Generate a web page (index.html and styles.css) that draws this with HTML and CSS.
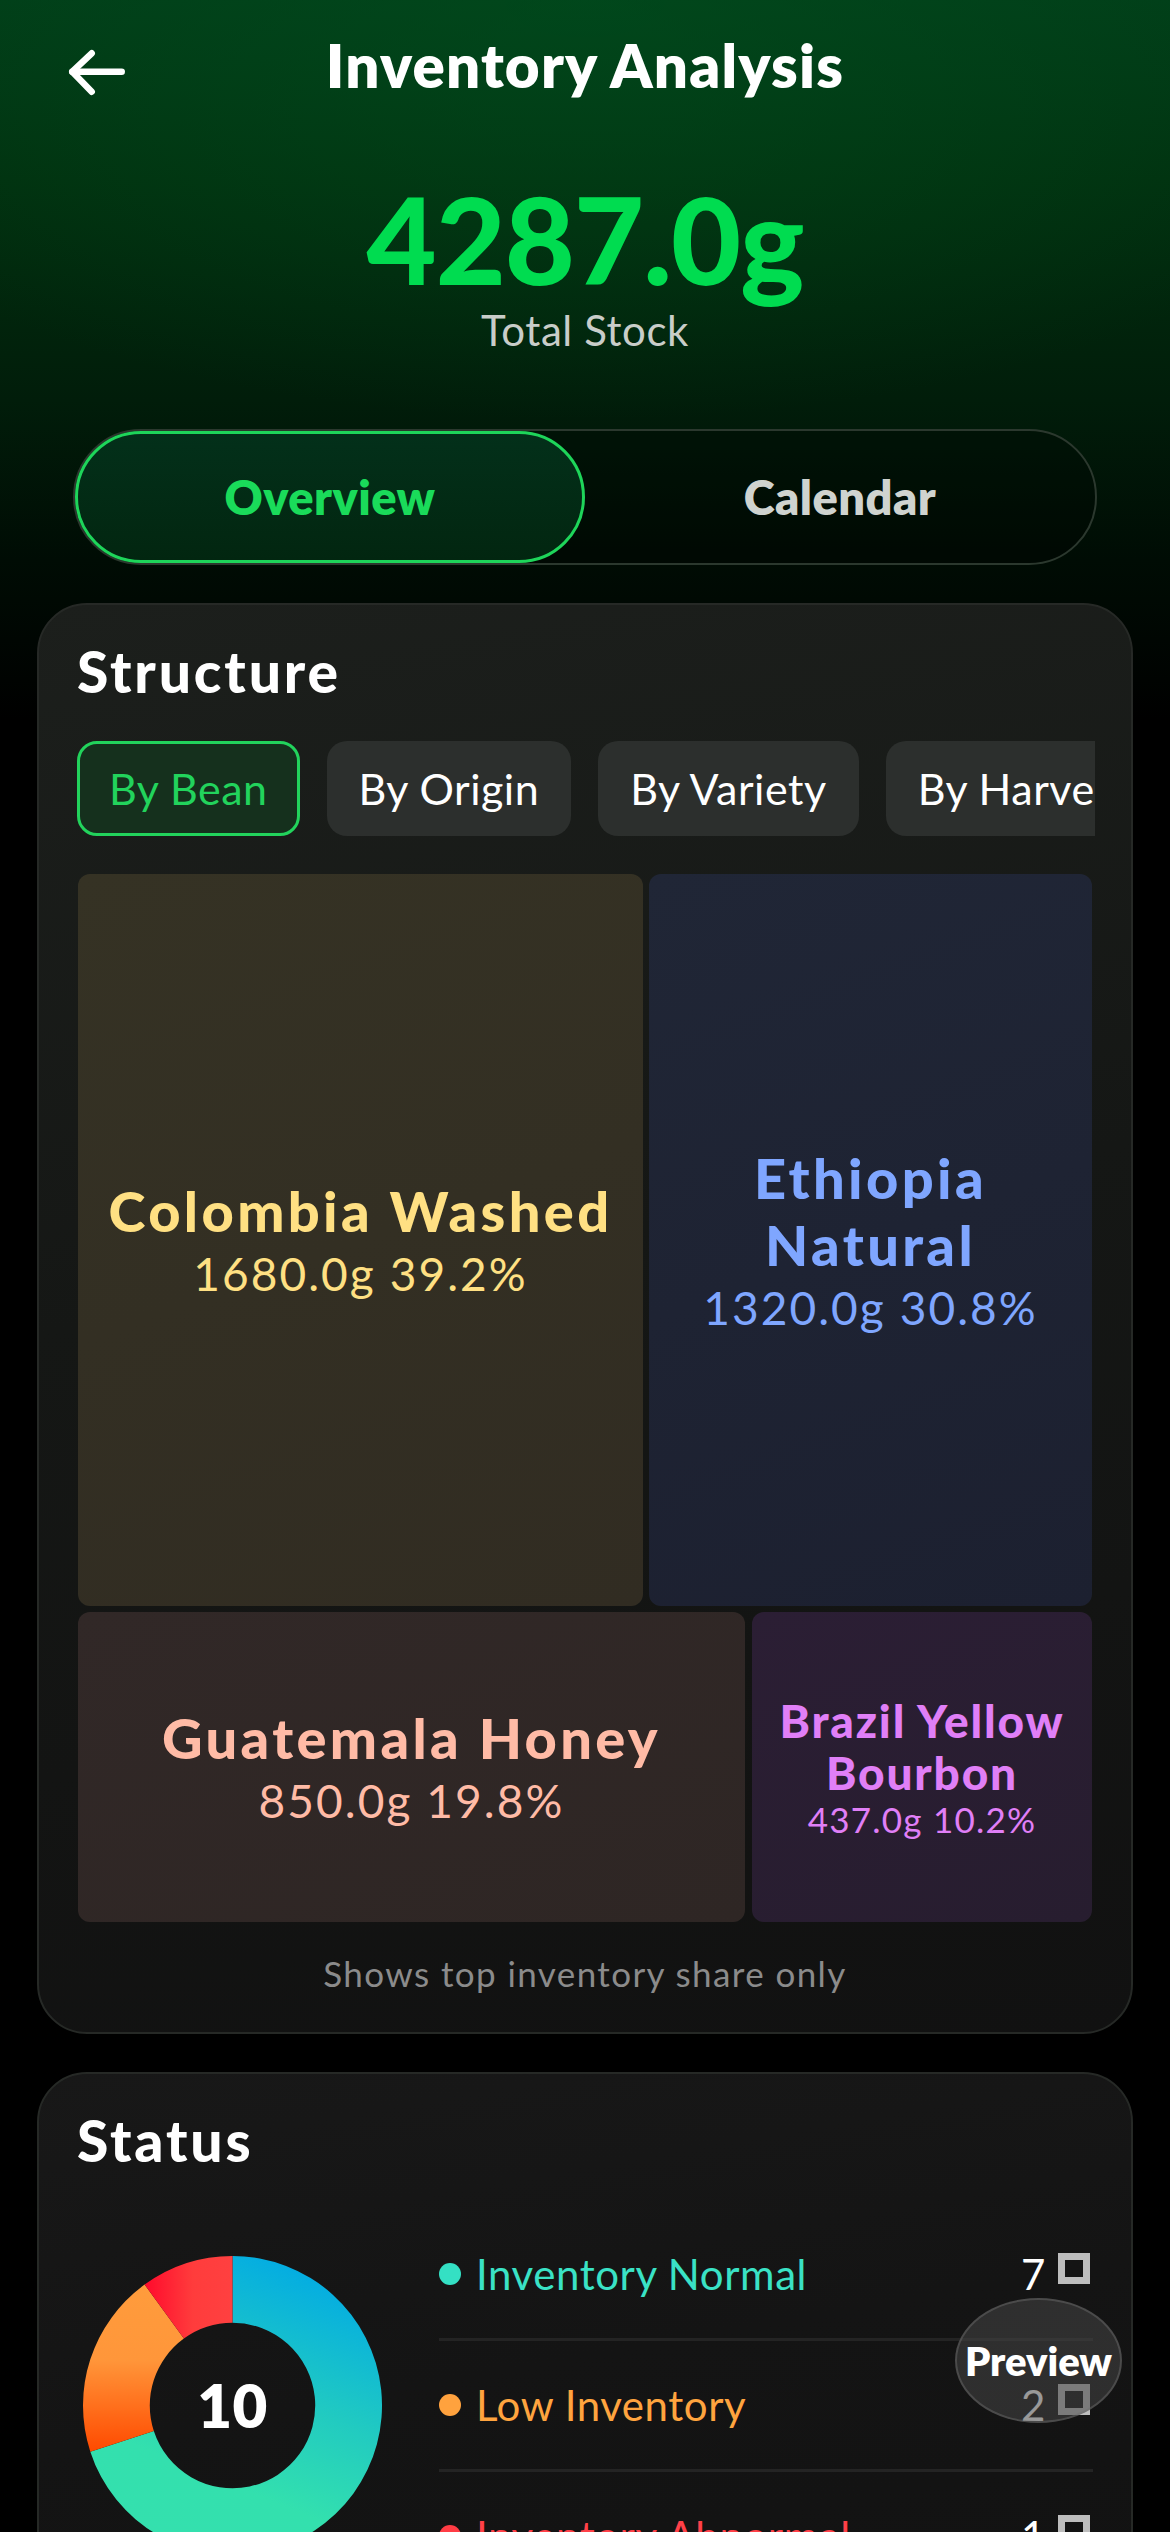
FILE: index.html
```html
<!DOCTYPE html>
<html lang="en">
<head>
<meta charset="utf-8">
<title>Inventory Analysis</title>
<link rel="stylesheet" href="styles.css">
</head>
<body>
<div class="page">
  <header class="topbar">
    <div class="back" aria-label="Back">
      <svg width="60" height="48" viewBox="0 0 60 48" fill="none" stroke="#ffffff" stroke-width="6.5" stroke-linecap="round" stroke-linejoin="round">
        <path d="M25.7 5.3 L6.3 23.7 L25.7 43.7"/>
        <path d="M6.3 23.7 H55.7"/>
      </svg>
    </div>
    <h1 class="title">Inventory Analysis</h1>
    <div></div>
  </header>

  <section class="summary">
    <div class="total">4287.0g</div>
    <div class="total-label">Total Stock</div>
  </section>

  <div class="segmented">
    <div class="seg seg-active">Overview</div>
    <div class="seg">Calendar</div>
  </div>

  <section class="card card-structure">
    <h2 class="card-title">Structure</h2>
    <div class="chips">
      <div class="chip chip-active">By Bean</div>
      <div class="chip">By Origin</div>
      <div class="chip">By Variety</div>
      <div class="chip">By Harvest</div>
    </div>
    <div class="treemap">
      <div class="tm-row tm-row-top">
        <div class="tile tile-colombia">
          <div class="tile-name">Colombia Washed</div>
          <div class="tile-value">1680.0g 39.2%</div>
        </div>
        <div class="tile tile-ethiopia">
          <div class="tile-name">Ethiopia<br>Natural</div>
          <div class="tile-value">1320.0g 30.8%</div>
        </div>
      </div>
      <div class="tm-row tm-row-bottom">
        <div class="tile tile-guatemala">
          <div class="tile-name">Guatemala Honey</div>
          <div class="tile-value">850.0g 19.8%</div>
        </div>
        <div class="tile tile-brazil">
          <div class="tile-name tile-name-sm">Brazil Yellow<br>Bourbon</div>
          <div class="tile-value tile-value-sm">437.0g 10.2%</div>
        </div>
      </div>
    </div>
    <p class="note">Shows top inventory share only</p>
  </section>

  <section class="card card-status">
    <h2 class="card-title">Status</h2>
    <div class="status-body">
      <div class="donut">
        <svg class="donut-svg" width="299" height="299" viewBox="0 0 300 300">
          <defs>
            <linearGradient id="gNormal" x1="0.75" y1="0" x2="0.35" y2="1">
              <stop offset="0" stop-color="#00a9e6"/>
              <stop offset="0.45" stop-color="#22cbc0"/>
              <stop offset="0.75" stop-color="#33e0ae"/>
              <stop offset="1" stop-color="#34e0ae"/>
            </linearGradient>
            <linearGradient id="gLow" x1="0" y1="0" x2="0" y2="1">
              <stop offset="0" stop-color="#ff9c3c"/>
              <stop offset="0.45" stop-color="#ff963a"/>
              <stop offset="1" stop-color="#ff4a00"/>
            </linearGradient>
            <linearGradient id="gAbn" x1="0" y1="0" x2="1" y2="0">
              <stop offset="0" stop-color="#ff0a2c"/>
              <stop offset="0.55" stop-color="#ff3c3c"/>
              <stop offset="1" stop-color="#ff4040"/>
            </linearGradient>
          </defs>
          <path fill="url(#gNormal)" d="M150 0 A150 150 0 1 1 7.34 196.35 L71.06 175.65 A83 83 0 1 0 150 67 Z"/>
          <path fill="url(#gLow)" d="M7.34 196.35 A150 150 0 0 1 61.83 28.65 L101.21 82.85 A83 83 0 0 0 71.06 175.65 Z"/>
          <path fill="url(#gAbn)" d="M61.83 28.65 A150 150 0 0 1 150 0 L150 67 A83 83 0 0 0 101.21 82.85 Z"/>
        </svg>
        <div class="donut-center">10</div>
      </div>
      <ul class="legend">
        <li class="legend-row">
          <span class="dot dot-normal"></span>
          <span class="legend-label label-normal">Inventory Normal</span>
          <span class="legend-count">7</span><span class="unit-box"></span>
        </li>
        <li class="legend-row">
          <span class="dot dot-low"></span>
          <span class="legend-label label-low">Low Inventory</span>
          <span class="legend-count">2</span><span class="unit-box"></span>
        </li>
        <li class="legend-row">
          <span class="dot dot-abn"></span>
          <span class="legend-label label-abn">Inventory Abnormal</span>
          <span class="legend-count">1</span><span class="unit-box"></span>
        </li>
      </ul>
    </div>
  </section>

  <div class="preview-bubble">Preview</div>
</div>
</body>
</html>
```

FILE: styles.css
```css
* { box-sizing: border-box; }

html, body {
  margin: 0;
  padding: 0;
  background: #000000;
}

body {
  font-family: "Lato", "Noto Sans", sans-serif;
  color: #ffffff;
  letter-spacing: 0.035em;
}

.page {
  position: relative;
  min-height: 2532px;
  padding: 0 37px 60px;
  background:
    radial-gradient(ellipse 900px 420px at 50% 0px, rgba(0, 80, 30, 0.55), rgba(0, 60, 20, 0) 100%),
    linear-gradient(180deg, #013c18 0px, #01300f 180px, #011d0a 400px, #000c04 560px, #000000 720px, #000000 100%);
}

/* Header */
.topbar {
  display: grid;
  grid-template-columns: 1fr auto 1fr;
  align-items: start;
  padding-top: 29px;
}

.back {
  padding-left: 29px;
  margin-top: 19px;
  display: flex;
}

.title {
  margin: 0;
  font-size: 60px;
  line-height: 72px;
  font-weight: 800;
  letter-spacing: 0.02em;
  color: #ffffff;
  text-align: center;
}

/* Summary */
.summary {
  margin-top: 77px;
  text-align: center;
}

.total {
  font-size: 121px;
  line-height: 121px;
  font-weight: 900;
  color: #00dc50;
  letter-spacing: -1px;
}

.total-label {
  margin-top: 6px;
  font-size: 42px;
  line-height: 50px;
  color: #c9cdc9;
}

/* Segmented control */
.segmented {
  margin: 74px 36px 0;
  height: 136px;
  border: 2px solid #2b382e;
  border-radius: 68px;
  display: grid;
  grid-template-columns: 1fr 1fr;
  background: rgba(0, 0, 0, 0.25);
}

.seg {
  display: flex;
  align-items: center;
  justify-content: center;
  font-size: 47px;
  font-weight: 800;
  letter-spacing: 0.01em;
  color: #cfd3cf;
  border-radius: 66px;
}

.seg-active {
  border: 3px solid #1ed55a;
  background: linear-gradient(180deg, #03301a 0%, #022610 100%);
  color: #1adb5a;
}

/* Cards */
.card {
  margin-top: 38px;
  border: 2px solid #262926;
  border-radius: 50px;
  padding: 32px 38px 38px;
  background: linear-gradient(170deg, #1c1f1c 0%, #151715 45%, #111111 100%);
}

.card-status {
  background: linear-gradient(170deg, #181818 0%, #141414 50%, #121212 100%);
}

.card-title {
  margin: 0;
  font-size: 57px;
  line-height: 68px;
  font-weight: 900;
  letter-spacing: 0.05em;
  color: #ffffff;
}

/* Chips */
.chips {
  display: flex;
  gap: 27px;
  margin-top: 36px;
  overflow: hidden;
  margin-right: -2px;
}

.chip {
  flex: 0 0 auto;
  height: 95px;
  padding: 0 29px;
  display: flex;
  align-items: center;
  border: 3px solid transparent;
  border-radius: 20px;
  background: #2c2f2d;
  font-size: 43px;
  letter-spacing: 0.012em;
  color: #ffffff;
}

.chip-active {
  background: #15301d;
  border-color: #22d35c;
  color: #22d35c;
}

/* Treemap */
.treemap {
  margin: 38px 1px 0;
  display: flex;
  flex-direction: column;
  gap: 6px;
}

.tm-row {
  display: flex;
  gap: 6px;
}

.tm-row-top { height: 732px; }
.tm-row-bottom { height: 310px; gap: 7px; }

.tile {
  border-radius: 12px;
  display: flex;
  flex-direction: column;
  align-items: center;
  justify-content: center;
  text-align: center;
  min-width: 0;
}

.tile-colombia { flex: 565 1 0; background: linear-gradient(160deg, #353224 0%, #312c22 100%); color: #ffe083; }
.tile-ethiopia { flex: 443 1 0; background: linear-gradient(160deg, #202636 0%, #1c2030 100%); color: #7fa6ff; }
.tile-guatemala { flex: 667 1 0; background: linear-gradient(160deg, #312827 0%, #2e2624 100%); color: #ffbba6; }
.tile-brazil { flex: 340 1 0; background: linear-gradient(160deg, #2b1e34 0%, #271d2f 100%); color: #e07ff7; }

.tile-name {
  font-size: 56px;
  line-height: 67px;
  font-weight: 900;
  letter-spacing: 0.06em;
}

.tile-value {
  font-size: 46px;
  line-height: 59px;
  letter-spacing: 0.045em;
}

.tile-name-sm {
  font-size: 46px;
  line-height: 52px;
  letter-spacing: 0.04em;
}

.tile-value-sm {
  font-size: 35px;
  line-height: 40px;
  letter-spacing: 0.035em;
}

.note {
  margin: 30px 0 0;
  font-size: 35px;
  line-height: 42px;
  letter-spacing: 0.04em;
  text-align: center;
  color: #8b8b8b;
}

/* Status */
.status-body {
  margin-top: 36px;
  display: flex;
  align-items: center;
}

.donut {
  margin-left: 6px;
  display: grid;
  flex: 0 0 auto;
}

.donut-svg,
.donut-center {
  grid-area: 1 / 1;
}

.donut-svg { display: block; }

.donut-center {
  align-self: center;
  justify-self: center;
  font-size: 60px;
  font-weight: 800;
  line-height: 72px;
  color: #ffffff;
}

.legend {
  list-style: none;
  margin: 0 0 0 57px;
  padding: 0;
  flex: 1 1 auto;
}

.legend-row {
  display: flex;
  align-items: center;
  height: 131px;
  border-bottom: 3px solid #242424;
  padding-right: 3px;
}

.legend-row:last-child {
  border-bottom: none;
  height: 128px;
}

.dot {
  width: 22px;
  height: 22px;
  border-radius: 50%;
  margin-right: 15px;
  flex: 0 0 auto;
}

.dot-normal { background: #34e0c4; }
.dot-low { background: #ffa23e; }
.dot-abn { background: #ff3c44; }

.legend-label {
  flex: 1 1 auto;
  font-size: 42px;
  line-height: 50px;
}

.label-normal { color: #3ae2c6; }
.label-low { color: #ffa43f; }
.label-abn { color: #ff4048; }

.legend-count {
  font-size: 42px;
  line-height: 50px;
  color: #ffffff;
}

.unit-box {
  width: 32px;
  height: 31px;
  margin-left: 12px;
  border: 7px solid #bdbdbd;
  flex: 0 0 auto;
  align-self: center;
  transform: translateY(-6px);
}

/* Floating preview bubble */
.preview-bubble {
  position: absolute;
  left: 955px;
  top: 2298px;
  width: 167px;
  height: 125px;
  border-radius: 50%;
  background: rgba(70, 70, 70, 0.55);
  border: 2px solid rgba(110, 110, 110, 0.45);
  display: flex;
  align-items: center;
  justify-content: center;
  font-size: 40px;
  font-weight: 800;
  letter-spacing: 0;
  color: #ffffff;
}
```
